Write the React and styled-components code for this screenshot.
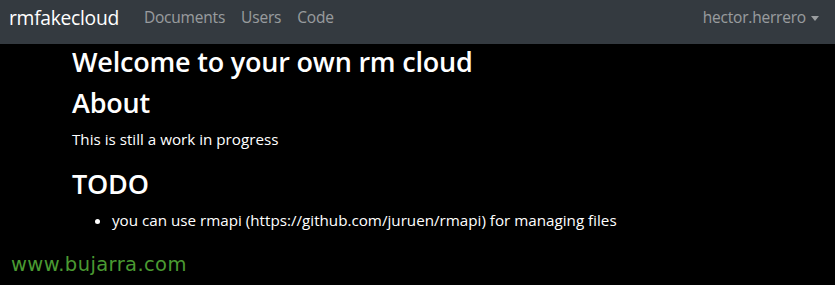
import React from 'react';
import styled, { createGlobalStyle } from 'styled-components';

const GlobalStyle = createGlobalStyle`
  html, body {
    margin: 0;
    padding: 0;
    background: #000;
  }
  body {
    font-family: "Open Sans", "Noto Sans", sans-serif;
    font-size: 16px;
    line-height: 1.5;
    color: #fff;
  }
`;

const Page = styled.div`
  position: relative;
  width: 835px;
  height: 285px;
  background: #000;
  overflow: hidden;
`;

const Navbar = styled.nav`
  display: flex;
  align-items: center;
  height: 44px;
  padding: 0 16px 8px 9px;
  background: #343a40;
  box-sizing: border-box;
`;

const Brand = styled.a`
  font-size: 19.3px;
  color: #fff;
  margin-right: 17px;
  letter-spacing: -0.3px;
  text-decoration: none;
`;

const NavList = styled.div`
  display: flex;
  flex: 1;
`;

const NavLink = styled.a`
  padding: 0 8px;
  font-size: 15.5px;
  color: rgba(255, 255, 255, 0.5);
  text-decoration: none;
  letter-spacing: -0.2px;
`;

const UserMenu = styled.a`
  display: flex;
  align-items: center;
  font-size: 15.5px;
  color: rgba(255, 255, 255, 0.5);
  letter-spacing: -0.2px;
`;

const Caret = styled.span`
  margin-left: 5px;
  width: 0;
  height: 0;
  border-left: 4.5px solid transparent;
  border-right: 4.5px solid transparent;
  border-top: 5px solid rgba(255, 255, 255, 0.5);
`;

const Container = styled.main`
  padding: 1px 0 0 72px;
`;

const Heading = styled.h3`
  margin: 0 0 8px;
  font-size: 27px;
  font-weight: 600;
  line-height: 33px;
  letter-spacing: -0.2px;
`;

const Text = styled.p`
  margin: 0 0 16px;
  font-size: 15.2px;
  line-height: 24px;
`;

const List = styled.ul`
  margin: 0;
  padding-left: 40px;
  font-size: 15.2px;
  line-height: 24px;
`;

const Watermark = styled.div`
  position: absolute;
  left: 11px;
  top: 250px;
  font-family: "DejaVu Sans", Verdana, sans-serif;
  font-size: 19.5px;
  color: #4a9a32;
  letter-spacing: 0.4px;
`;

export default function App() {
  return (
    <Page>
      <GlobalStyle />
      <Navbar>
        <Brand>rmfakecloud</Brand>
        <NavList>
          <NavLink>Documents</NavLink>
          <NavLink>Users</NavLink>
          <NavLink>Code</NavLink>
        </NavList>
        <UserMenu>
          hector.herrero
          <Caret />
        </UserMenu>
      </Navbar>
      <Container>
        <Heading>Welcome to your own rm cloud</Heading>
        <Heading>About</Heading>
        <Text>This is still a work in progress</Text>
        <Heading>TODO</Heading>
        <List>
          <li>you can use rmapi (https://github.com/juruen/rmapi) for managing files</li>
        </List>
      </Container>
      <Watermark>www.bujarra.com</Watermark>
    </Page>
  );
}
